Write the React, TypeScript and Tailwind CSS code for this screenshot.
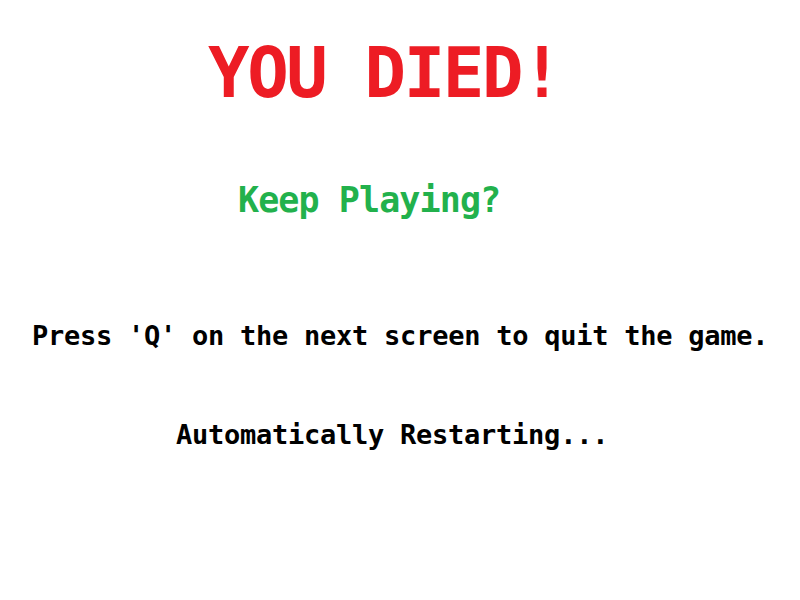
export default function App() {
  const mono = { fontFamily: '"DejaVu Sans Mono", "Liberation Mono", monospace' };
  return (
    <div className="w-[800px] h-[600px] bg-white flex flex-col font-bold leading-none" style={mono}>
      {/* Title */}
      <div className="mt-[39px] pl-[208px] text-[69px] tracking-[-2.4px] text-[#ed1c24] whitespace-pre">
        YOU DIED!
      </div>
      <div className="mt-[75px] pl-[238px] text-[35px] tracking-[-0.9px] text-[#22b14c] whitespace-pre">
        Keep Playing?
      </div>
      <div className="mt-[104px] pl-[32px] text-[27px] tracking-[-0.25px] text-black whitespace-pre">
        Press 'Q' on the next screen to quit the game.
      </div>
      <div className="mt-[72px] pl-[176px] text-[27px] tracking-[-0.25px] text-black whitespace-pre">
        Automatically Restarting...
      </div>
    </div>
  );
}
